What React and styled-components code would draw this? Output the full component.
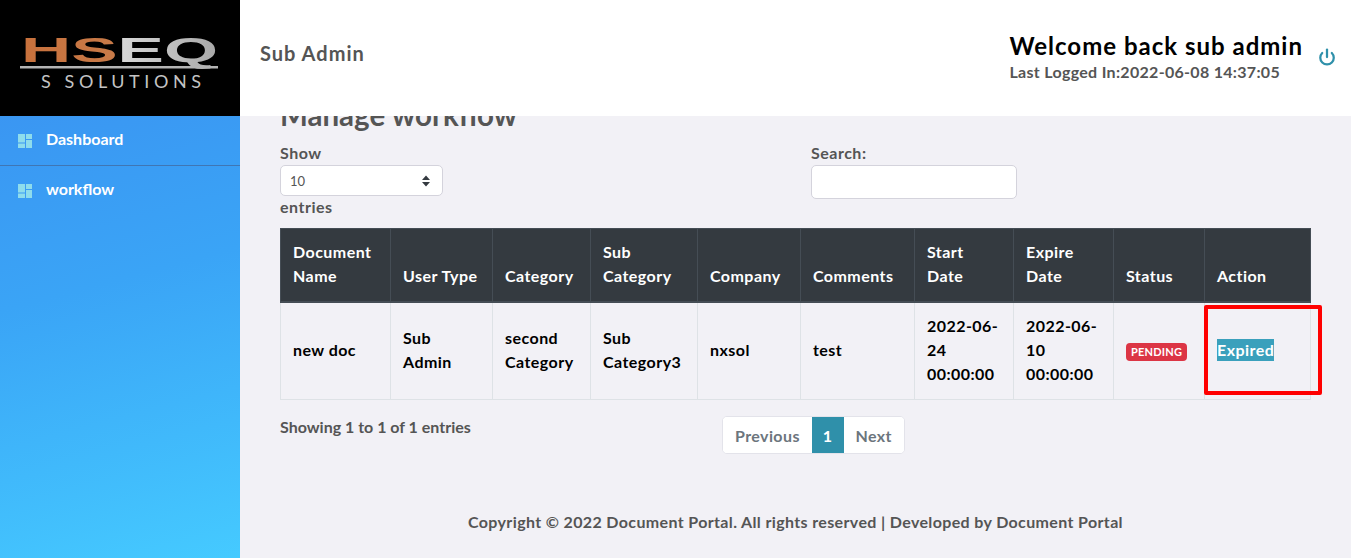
import React from "react";
import styled, { createGlobalStyle } from "styled-components";
import { Power } from "lucide-react";

const Global = createGlobalStyle`
  html, body {
    margin: 0;
    height: 100%;
  }
  body {
    background: #f2f1f6;
    color: #555;
    font-family: "Lato", "Liberation Sans", sans-serif;
    font-size: 16px;
    font-weight: 700;
    overflow: hidden;
  }
`;

const Page = styled.div`
  display: grid;
  grid-template-columns: 240px 1fr;
  height: 558px;
`;

const Sidebar = styled.aside`
  display: flex;
  flex-direction: column;
  background: linear-gradient(165deg, #3a8ef0 0%, #3aa4f6 50%, #45caff 100%);
`;

const LogoBox = styled.div`
  display: flex;
  align-items: center;
  justify-content: center;
  height: 116px;
  padding-top: 8px;
  box-sizing: border-box;
  background: #000;
`;

const NavItem = styled.a`
  display: flex;
  align-items: center;
  gap: 14px;
  height: ${(p) => p.$height}px;
  padding-left: 18px;
  color: #fff;
  border-bottom: ${(p) => (p.$divider ? "1px solid #3f76b4" : "none")};
  box-sizing: border-box;
`;

const NavLabel = styled.span`
  margin-top: -4px;
`;

const Main = styled.main`
  display: flex;
  flex-direction: column;
  min-width: 0;
  overflow: hidden;
`;

const Header = styled.header`
  position: relative;
  z-index: 2;
  display: flex;
  align-items: center;
  justify-content: space-between;
  height: 116px;
  flex: none;
  padding: 0 15px 8px 20px;
  box-sizing: border-box;
  background: #fff;
`;

const Role = styled.div`
  padding-bottom: 2px;
  font-size: 20px;
  letter-spacing: 1px;
  color: #555;
`;

const HeaderRight = styled.div`
  display: flex;
  align-items: center;
  gap: 15px;
`;

const Greeting = styled.div`
  padding-top: 8px;
`;

const Welcome = styled.div`
  color: #000;
  font-size: 24px;
  line-height: 28px;
  letter-spacing: 1px;
`;

const LastLogged = styled.div`
  color: #555;
  line-height: 24px;
  letter-spacing: 0.3px;
`;

const PowerIcon = styled(Power)`
  color: #2f90aa;
  margin-top: 6px;
`;

const Content = styled.section`
  display: flex;
  flex-direction: column;
  padding: 0 40px;
  margin-top: -19px;
`;

const Title = styled.h3`
  margin: 0 0 8px;
  font-size: 29.5px;
  line-height: 36px;
  font-weight: 700;
  color: #555;
`;

const Filters = styled.div`
  display: grid;
  grid-template-columns: 531px 1fr;
  height: 87px;
`;

const FieldLabel = styled.div`
  line-height: ${(p) => p.$line || 24}px;
  letter-spacing: 0.5px;
`;

const SelectBox = styled.div`
  display: flex;
  align-items: center;
  justify-content: space-between;
  width: 163px;
  height: 31px;
  padding: 0 12px 0 9px;
  box-sizing: border-box;
  background: #fff;
  border: 1px solid #d4d3dc;
  border-radius: 5px;
  color: #555;
  font-size: 13px;
  font-weight: 400;
`;

const SearchBox = styled.div`
  width: 206px;
  height: 34px;
  box-sizing: border-box;
  background: #fff;
  border: 1px solid #d4d3dc;
  border-radius: 5px;
`;

const Table = styled.table`
  width: 1030px;
  table-layout: fixed;
  border-collapse: collapse;
`;

const Col = styled.col`
  width: ${(p) => p.$w}px;
`;

const Th = styled.th`
  padding: 0 12px 13px;
  height: 73px;
  box-sizing: border-box;
  vertical-align: bottom;
  text-align: left;
  background: #343a40;
  color: #fff;
  line-height: 24px;
  letter-spacing: 0.45px;
  font-weight: 700;
  border: 1px solid #454d55;
  border-bottom-width: 2px;
`;

const Td = styled.td`
  position: relative;
  padding: 0 12px 2px;
  height: 98px;
  box-sizing: border-box;
  color: #000;
  line-height: 24px;
  letter-spacing: 0.45px;
  border: 1px solid #dee2e6;
`;

const Badge = styled.span`
  display: inline-block;
  padding: 0 5px;
  background: #dc3545;
  color: #fff;
  font-size: 11px;
  line-height: 18px;
  letter-spacing: 0.2px;
  border-radius: 4px;
`;

const Selected = styled.span`
  background: #3aa0bc;
  color: #fff;
  padding: 1px 0 2px;
`;

const Annotation = styled.div`
  position: absolute;
  left: -1px;
  top: 2px;
  width: 118px;
  height: 90px;
  box-sizing: border-box;
  border: 4px solid #f00;
  border-radius: 2px;
`;

const Footing = styled.div`
  display: grid;
  grid-template-columns: 442px auto;
  justify-content: start;
  margin-top: 16px;
`;

const Info = styled.div`
  line-height: 22px;
`;

const Pager = styled.div`
  display: flex;
  height: 38px;
  box-sizing: border-box;
  background: #fff;
  border: 1px solid #e3e3ea;
  border-radius: 5px;
  overflow: hidden;
`;

const PageLink = styled.a`
  display: flex;
  align-items: center;
  padding: 0 ${(p) => (p.$active ? 11 : 12)}px;
  letter-spacing: 0.4px;
  background: ${(p) => (p.$active ? "#2f90aa" : "#fff")};
  color: ${(p) => (p.$active ? "#fff" : "#6c757d")};
`;

const Copyright = styled.footer`
  margin-top: 57px;
  text-align: center;
  line-height: 22px;
  letter-spacing: 0.36px;
  color: #555;
`;

const DashIcon = () => (
  <svg width="14" height="14" viewBox="0 0 14 14" fill="#8edcec">
    <rect x="0" y="0" width="7" height="8.5" />
    <rect x="0" y="9.5" width="7" height="4.5" />
    <rect x="8" y="0" width="6" height="5" />
    <rect x="8" y="6" width="6" height="8" />
  </svg>
);

const Logo = () => (
  <svg width="200" height="64" viewBox="0 0 200 64">
    <defs>
      <linearGradient id="hseq" x1="0" x2="1" y1="0" y2="0">
        <stop offset="0" stopColor="#c8713c" />
        <stop offset="0.48" stopColor="#c87a48" />
        <stop offset="0.5" stopColor="#d8d8d8" />
        <stop offset="1" stopColor="#a8a8a8" />
      </linearGradient>
    </defs>
    <text
      x="1"
      y="32"
      textLength="197"
      lengthAdjust="spacingAndGlyphs"
      fontFamily="Liberation Sans, sans-serif"
      fontSize="35"
      fill="url(#hseq)"
    >
      HSEQ
    </text>
    <rect x="0" y="36" width="198" height="2.5" fill="#b4b4b4" />
    <text
      x="21"
      y="58"
      textLength="160"
      fontFamily="Lato, sans-serif"
      fontSize="18"
      fontWeight="400"
      fill="#c4c4c4"
    >
      S SOLUTIONS
    </text>
  </svg>
);

const columns = [110, 102, 98, 107, 103, 114, 99, 100, 91, 106];

export default function App() {
  return (
    <Page>
      <Global />
      <Sidebar>
        <LogoBox>
          <Logo />
        </LogoBox>
        <NavItem $height={50} $divider>
          <DashIcon />
          <NavLabel>Dashboard</NavLabel>
        </NavItem>
        <NavItem $height={49}>
          <DashIcon />
          <NavLabel>workflow</NavLabel>
        </NavItem>
      </Sidebar>
      <Main>
        <Header>
          <Role>Sub Admin</Role>
          <HeaderRight>
            <Greeting>
              <Welcome>Welcome back sub admin</Welcome>
              <LastLogged>Last Logged In:2022-06-08 14:37:05</LastLogged>
            </Greeting>
            <PowerIcon size={18} strokeWidth={3} />
          </HeaderRight>
        </Header>
        <Content>
          <Title>Manage workflow</Title>
          <Filters>
            <div>
              <FieldLabel>Show</FieldLabel>
              <SelectBox>
                10
                <svg width="8" height="12" viewBox="0 0 8 12" fill="#343a40">
                  <path d="M4 0.5 8 5H0zM0 7h8l-4 4.5z" />
                </svg>
              </SelectBox>
              <FieldLabel $line={22}>entries</FieldLabel>
            </div>
            <div>
              <FieldLabel>Search:</FieldLabel>
              <SearchBox />
            </div>
          </Filters>
          <Table>
            <colgroup>
              {columns.map((w, i) => (
                <Col key={i} $w={w} />
              ))}
            </colgroup>
            <thead>
              <tr>
                <Th>Document Name</Th>
                <Th>User Type</Th>
                <Th>Category</Th>
                <Th>Sub Category</Th>
                <Th>Company</Th>
                <Th>Comments</Th>
                <Th>Start Date</Th>
                <Th>Expire Date</Th>
                <Th>Status</Th>
                <Th>Action</Th>
              </tr>
            </thead>
            <tbody>
              <tr>
                <Td>new doc</Td>
                <Td>Sub Admin</Td>
                <Td>second Category</Td>
                <Td>Sub Category3</Td>
                <Td>nxsol</Td>
                <Td>test</Td>
                <Td>2022-06-24 00:00:00</Td>
                <Td>2022-06-10 00:00:00</Td>
                <Td>
                  <Badge>PENDING</Badge>
                </Td>
                <Td>
                  <Selected>Expired</Selected>
                  <Annotation />
                </Td>
              </tr>
            </tbody>
          </Table>
          <Footing>
            <Info>Showing 1 to 1 of 1 entries</Info>
            <Pager>
              <PageLink>Previous</PageLink>
              <PageLink $active>1</PageLink>
              <PageLink>Next</PageLink>
            </Pager>
          </Footing>
          <Copyright>
            Copyright © 2022 Document Portal. All rights reserved | Developed by Document Portal
          </Copyright>
        </Content>
      </Main>
    </Page>
  );
}
